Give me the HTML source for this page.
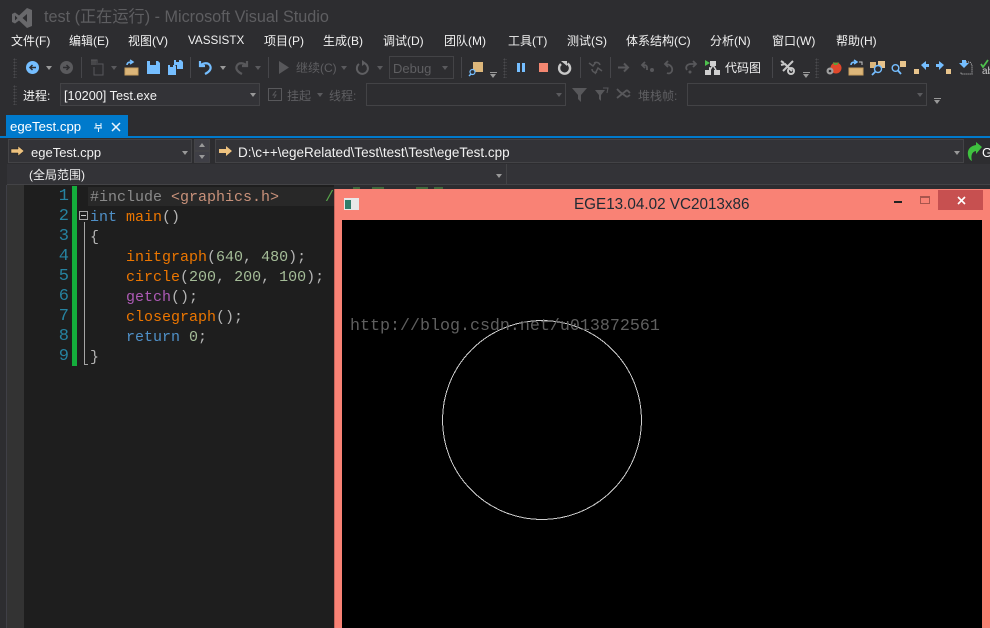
<!DOCTYPE html>
<html><head><meta charset="utf-8">
<style>
html,body{margin:0;padding:0;background:#2d2d30}
#r{position:relative;width:990px;height:628px;overflow:hidden;background:#2d2d30;font-family:"Liberation Sans","Noto Sans CJK SC",sans-serif;font-size:12px;color:#f1f1f1}
.a{position:absolute;white-space:pre}
.b{position:absolute;box-sizing:border-box}
.m{top:33px;line-height:16px;font-size:12px}
.d{color:#6d6d70}
.c{position:absolute;font-family:"Liberation Mono",monospace;font-size:15px;line-height:20px;white-space:pre;color:#b4b4b4}
.n{position:absolute;left:40px;width:29px;text-align:right;font-family:"Liberation Mono",monospace;font-size:17px;line-height:20px;color:#2683a0}
.o{color:#ec7600}.g{color:#a5bd98}.p{color:#4f90c8}.u{color:#ad5ab5}
.grip{position:absolute;width:4px;background-image:radial-gradient(#4a4a4e 0.8px,transparent 1px);background-size:3px 3px}
.sep{position:absolute;width:1px;background:#46464a}
.tri{position:absolute;width:0;height:0;border-left:3.5px solid transparent;border-right:3.5px solid transparent;border-top:4px solid #999}
.tri.x{border-top-color:#5a5a5d}
svg{position:absolute;overflow:visible}
</style></head><body><div id="r">

<!-- title -->
<svg style="left:12px;top:8px" width="21" height="20" viewBox="0 0 21 20"><path d="M15 0 L20 2 V18 L15 20 L7 12.5 L3 15.5 L0 14 V6 L3 4.500 L7 7.500Z M15 6 L10.500 10 L15 14Z M3 7.500 V12.500 L5.500 10Z" fill="#68686b" fill-rule="evenodd"/></svg>
<div class="a" style="left:44px;top:8px;font-size:16.200px;line-height:19px;color:#5e5e61">test (正在运行) - Microsoft Visual Studio</div>

<!-- menu -->
<div class="a m" style="left:11px">文件(F)</div>
<div class="a m" style="left:69px">编辑(E)</div>
<div class="a m" style="left:128px">视图(V)</div>
<div class="a m" style="left:188px;font-size:11.700px">VASSISTX</div>
<div class="a m" style="left:264px">项目(P)</div>
<div class="a m" style="left:323px">生成(B)</div>
<div class="a m" style="left:383px">调试(D)</div>
<div class="a m" style="left:444px">团队(M)</div>
<div class="a m" style="left:508px">工具(T)</div>
<div class="a m" style="left:567px">测试(S)</div>
<div class="a m" style="left:626px">体系结构(C)</div>
<div class="a m" style="left:710px">分析(N)</div>
<div class="a m" style="left:772px">窗口(W)</div>
<div class="a m" style="left:836px">帮助(H)</div>

<!-- toolbar 1 -->
<div class="grip" style="left:13px;top:58px;height:20px"></div>
<svg style="left:26px;top:61px" width="13" height="13"><circle cx="6.500" cy="6.500" r="6.500" fill="#75beff"/><path d="M10 6.500H4M6.500 4L4 6.500L6.500 9" stroke="#2d2d30" stroke-width="1.500" fill="none"/></svg>
<div class="tri" style="left:46px;top:66px"></div>
<svg style="left:60px;top:61px" width="13" height="13"><circle cx="6.500" cy="6.500" r="6.500" fill="#5a5a5d"/><path d="M3 6.500H9M6.500 4L9 6.500L6.500 9" stroke="#2d2d30" stroke-width="1.500" fill="none"/></svg>
<div class="sep" style="left:81px;top:57px;height:21px"></div>
<svg style="left:90px;top:59px" width="14" height="17"><path d="M1 1h6v3M6 5h7v11H4V8" stroke="#58585b" fill="none"/><path d="M1 1h5v5H1z" fill="#58585b" opacity=".6"/></svg>
<div class="tri x" style="left:111px;top:66px"></div>
<svg style="left:124px;top:60px" width="15" height="16"><path d="M1 8h13v7H1z" fill="#dcb67a"/><path d="M1 8h13v7H1z" stroke="#c9a05f" fill="none"/><path d="M3 5C3 2 6 2 8 2M6 0l3 2-3 2" stroke="#75beff" stroke-width="1.500" fill="none"/></svg>
<svg style="left:147px;top:61px" width="13" height="13"><path d="M0 0h3v4h6V0h2l2 2v11H0z" fill="#75beff"/></svg>
<svg style="left:168px;top:60px" width="15" height="15"><path d="M6 0h2v2h3V0h2l2 2v7H9V5H6z" fill="#75beff"/><path d="M0 5h2v2h3V5h2l1 1v9H0z" fill="#75beff"/></svg>
<div class="sep" style="left:190px;top:57px;height:21px"></div>
<svg style="left:198px;top:60px" width="15" height="15"><path d="M2 1v5h5M2.500 5.500C5 3 10 2 12 5.500C14 9 11 12 7 14" stroke="#75beff" stroke-width="2.200" fill="none"/></svg>
<div class="tri" style="left:220px;top:66px"></div>
<svg style="left:234px;top:60px" width="15" height="15"><path d="M13 1v5H8M12.500 5.500C10 3 5 2 3 5.500C1 9 4 12 8 14" stroke="#58585b" stroke-width="2.200" fill="none"/></svg>
<div class="tri x" style="left:255px;top:66px"></div>
<div class="sep" style="left:268px;top:57px;height:21px"></div>
<svg style="left:279px;top:61px" width="10" height="13"><path d="M0 0L10 6.500L0 13Z" fill="#58585b"/></svg>
<div class="a d" style="left:296px;top:60px;line-height:16px;color:#5f5f62">继续(C)</div>
<div class="tri x" style="left:341px;top:66px"></div>
<svg style="left:356px;top:60px" width="14" height="15"><path d="M9 3.500A5.500 5.500 0 1 1 3 4" stroke="#5f5f62" stroke-width="2" fill="none"/><path d="M6 0v6l4-3z" fill="#5f5f62"/></svg>
<div class="tri x" style="left:377px;top:66px"></div>
<div class="b" style="left:389px;top:56px;width:65px;height:23px;border:1px solid #434346"></div>
<div class="a" style="left:393px;top:60px;line-height:17px;font-size:13px;color:#5f5f62">Debug</div>
<div class="tri x" style="left:442px;top:66px"></div>
<div class="sep" style="left:461px;top:57px;height:21px"></div>
<svg style="left:469px;top:60px" width="14" height="16"><path d="M4 2h10v10H4z" fill="#dcb67a"/><circle cx="3.500" cy="12" r="2.500" stroke="#75beff" fill="#2d2d30" stroke-width="1.200"/><path d="M2 14L0 16" stroke="#75beff" stroke-width="1.500"/></svg>
<div class="b" style="left:490px;top:72px;width:7px;height:1px;background:#999"></div><div class="tri" style="left:490px;top:74px"></div>
<div class="grip" style="left:503px;top:58px;height:20px"></div>
<div class="b" style="left:517px;top:63px;width:3px;height:9px;background:#75beff"></div>
<div class="b" style="left:522px;top:63px;width:3px;height:9px;background:#75beff"></div>
<div class="b" style="left:539px;top:63px;width:9px;height:9px;background:#f48771"></div>
<svg style="left:558px;top:60px" width="14" height="15"><path d="M9.500 3.500A5.500 5.500 0 1 1 3 4" stroke="#c8c8c8" stroke-width="2.400" fill="none"/><path d="M3 1l6 0v5" stroke="none" fill="#c8c8c8"/></svg>
<div class="sep" style="left:580px;top:57px;height:21px"></div>
<svg style="left:588px;top:60px" width="15" height="15"><path d="M1 3l4 3 3-4M7 14l3-6 4 3M4 9c0 3 3 4 5 3M12 5C11 2 8 2 6 3" stroke="#58585b" stroke-width="1.500" fill="none"/></svg>
<div class="sep" style="left:610px;top:57px;height:21px"></div>
<svg style="left:618px;top:62px" width="12" height="11"><path d="M0 5.500h9M6 1.500l4 4-4 4" stroke="#58585b" stroke-width="2" fill="none"/></svg>
<svg style="left:640px;top:61px" width="15" height="13"><path d="M5 1L2 4l3 3M2 4h2c2 0 3 1 3 3v2" stroke="#58585b" stroke-width="1.800" fill="none"/><circle cx="12" cy="9" r="2" fill="#58585b"/></svg>
<svg style="left:663px;top:60px" width="12" height="15"><path d="M5 1L2 4l3 3M2 4c5 0 8 3 7 7-1 2-3 3-5 2" stroke="#58585b" stroke-width="1.800" fill="none"/></svg>
<svg style="left:685px;top:61px" width="12" height="13"><path d="M8 0l3 3-3 3M11 3H6C2 3 0 6 2 9" stroke="#58585b" stroke-width="1.800" fill="none"/><circle cx="5" cy="11" r="1.500" fill="#58585b"/></svg>
<svg style="left:705px;top:60px" width="15" height="15"><path d="M0 0l5 3-5 3z" fill="#4ec14e"/><path d="M5 1h6v5H5zM4 7l3 1-3 3zM0 10h6v5H0zM9 10h6v5H9z" fill="#d0d0d0"/><path d="M8 5l-3 5M8 5l3 5" stroke="#d0d0d0" stroke-width="1.500"/></svg>
<div class="a" style="left:725px;top:60px;line-height:16px">代码图</div>
<div class="sep" style="left:772px;top:57px;height:21px"></div>
<svg style="left:780px;top:60px" width="16" height="15"><path d="M1 1l3 2M1 5l4-1 7 7M13 1l-10 10" stroke="#c8c8c8" stroke-width="2" fill="none"/><circle cx="11" cy="11" r="3" stroke="#c8c8c8" stroke-width="2" fill="none"/></svg>
<div class="b" style="left:803px;top:72px;width:7px;height:1px;background:#999"></div><div class="tri" style="left:803px;top:74px"></div>
<div class="grip" style="left:815px;top:58px;height:20px"></div>
<svg style="left:825px;top:60px" width="16" height="16"><circle cx="11" cy="8" r="5.500" fill="#e0482b"/><path d="M8 2l3 1 3-1-2 3h-3z" fill="#5a9e3c"/><circle cx="5" cy="11" r="3.500" fill="#a0a0a0"/><circle cx="5" cy="11" r="1.300" fill="#2d2d30"/></svg>
<svg style="left:848px;top:60px" width="15" height="16"><path d="M1 8h14v7H1z" fill="#dcb67a"/><path d="M1 8h14v7H1z" stroke="#c9a05f" fill="none"/><path d="M3 5C3 2 6 2 8 2M6 0l3 2-3 2" stroke="#75beff" stroke-width="1.500" fill="none"/><path d="M11 2h3v3" stroke="#c8c8c8" fill="none"/></svg>
<svg style="left:870px;top:60px" width="15" height="16"><path d="M0 2h6v6H0z" fill="#dcb67a"/><path d="M8 1h7v7H8z" fill="#e8c48c"/><circle cx="8" cy="9" r="3.500" stroke="#75beff" fill="#2d2d30" stroke-width="1.400"/><path d="M5.500 11.500L2 15" stroke="#75beff" stroke-width="1.800"/></svg>
<svg style="left:891px;top:61px" width="15" height="14"><path d="M9 0h6v6H9z" fill="#e8c48c"/><circle cx="4.500" cy="7" r="3.300" stroke="#75beff" fill="none" stroke-width="1.400"/><path d="M7 9.500L10 13" stroke="#75beff" stroke-width="1.800"/></svg>
<svg style="left:914px;top:60px" width="15" height="15"><path d="M0 9h5v5H0z" fill="#e8c48c"/><path d="M7 5l5-4v3h3v3h-3v3z" fill="#75beff"/></svg>
<svg style="left:936px;top:60px" width="15" height="15"><path d="M10 9h5v5h-5z" fill="#e8c48c"/><path d="M8 5L3 1v3H0v3h3v3z" fill="#75beff"/></svg>
<svg style="left:958px;top:60px" width="15" height="15"><path d="M6 8L1 3h3V0h4v3h3z" fill="#75beff"/><path d="M8 2h4l2 3v9H3v-2" stroke="#c8c8c8" stroke-dasharray="1 1" fill="none"/></svg>
<svg style="left:980px;top:60px" width="10" height="15"><path d="M1 4l2 3 5-7" stroke="#4ec14e" stroke-width="1.800" fill="none"/></svg>
<div class="a" style="left:982px;top:67px;font-size:10px;line-height:10px;color:#c8c8c8">ab</div>

<!-- toolbar 2 -->
<div class="grip" style="left:13px;top:85px;height:20px"></div>
<div class="a" style="left:23px;top:88px;line-height:16px">进程:</div>
<div class="b" style="left:60px;top:83px;width:200px;height:23px;border:1px solid #434346;background:#333337"></div>
<div class="a" style="left:64px;top:88px;line-height:16px;font-size:12.700px">[10200] Test.exe</div>
<div class="tri" style="left:250px;top:93px"></div>
<svg style="left:268px;top:88px" width="14" height="13"><path d="M.5.5h13v12H.5z" stroke="#58585b" fill="none"/><path d="M8 3L5 7h3L6 10" stroke="#58585b" fill="none"/></svg>
<div class="a" style="left:287px;top:88px;line-height:16px;color:#5f5f62">挂起</div>
<div class="tri x" style="left:317px;top:93px"></div>
<div class="a" style="left:329px;top:88px;line-height:16px;color:#5f5f62">线程:</div>
<div class="b" style="left:366px;top:83px;width:200px;height:23px;border:1px solid #434346"></div>
<div class="tri x" style="left:556px;top:93px"></div>
<svg style="left:572px;top:88px" width="15" height="14"><path d="M0 0h15L9 7v7L6 11V7z" fill="#58585b"/></svg>
<svg style="left:595px;top:88px" width="14" height="13"><path d="M0 2h10L6 7v6L4 11V7z" fill="#58585b"/><path d="M8 0l5 0-1 5" stroke="#58585b" fill="none"/></svg>
<svg style="left:616px;top:88px" width="16" height="13"><path d="M1 1l3 3 7 5M1 10l10-8M11 2l3 3M11 9l3-2" stroke="#58585b" stroke-width="1.800" fill="none"/></svg>
<div class="a" style="left:638px;top:88px;line-height:16px;color:#5f5f62">堆栈帧:</div>
<div class="b" style="left:687px;top:83px;width:240px;height:23px;border:1px solid #434346"></div>
<div class="tri x" style="left:917px;top:93px"></div>
<div class="b" style="left:934px;top:98px;width:7px;height:1px;background:#999"></div><div class="tri" style="left:934px;top:100px"></div>

<!-- tab -->
<div class="b" style="left:6px;top:115px;width:122px;height:22px;background:#007acc"></div>
<div class="a" style="left:10px;top:118px;font-size:13.200px;line-height:17px;color:#fff">egeTest.cpp</div>
<svg style="left:93px;top:122px" width="10" height="10"><path d="M3 1v5h5V1M1 6h8M5.500 6v4M3 3.500h5" stroke="#e8f4fc" fill="none"/></svg>
<svg style="left:111px;top:122px" width="10" height="10"><path d="M1 1l8 8M9 1l-8 8" stroke="#e8f4fc" stroke-width="1.500"/></svg>
<div class="b" style="left:0;top:136px;width:990px;height:2px;background:#007acc"></div>

<!-- nav bar -->
<div class="b" style="left:8px;top:139px;width:184px;height:24px;border:1px solid #434346;background:#333337"></div>
<svg style="left:11px;top:146px" width="13" height="10"><path d="M7 0l6 5-6 5V7H0V3h7z" fill="#eec27f"/><path d="M7 0l6 5-6 5V7H0V3h7z" fill="none" stroke="#1e1e1e" stroke-width=".5"/></svg>
<div class="a" style="left:31px;top:145px;font-size:13px;line-height:16px">egeTest.cpp</div>
<div class="tri" style="left:182px;top:151px"></div>
<div class="b" style="left:194px;top:139px;width:16px;height:12px;background:#3f3f46;border:1px solid #434346"></div>
<div class="b" style="left:194px;top:151px;width:16px;height:12px;background:#3f3f46;border:1px solid #434346"></div>
<div class="tri" style="left:198.500px;top:143px;border-top:0;border-bottom:4px solid #999"></div>
<div class="tri" style="left:198.500px;top:155px"></div>
<div class="b" style="left:215px;top:139px;width:749px;height:24px;border:1px solid #434346;background:#333337"></div>
<svg style="left:219px;top:146px" width="13" height="10"><path d="M7 0l6 5-6 5V7H0V3h7z" fill="#eec27f"/></svg>
<div class="a" style="left:238px;top:145px;font-size:13.500px;line-height:16px">D:\c++\egeRelated\Test\test\Test\egeTest.cpp</div>
<div class="tri" style="left:954px;top:151px"></div>
<svg style="left:967px;top:142px" width="16" height="19"><path d="M15 5L9 0v3C3 4 0 8 1 13c.5 3 2 5 4 6-1-4-1-9 4-10v3z" fill="#3fc13f"/></svg>
<div class="a" style="left:982px;top:145px;font-size:13px;line-height:16px;color:#fff">G</div>

<!-- scope bar -->
<div class="b" style="left:7px;top:164px;width:499px;height:21px;border-bottom:1px solid #434346;background:#333337"></div>
<div class="a" style="left:29px;top:168px;line-height:15px">(全局范围)</div>
<div class="tri" style="left:496px;top:174px"></div>
<div class="b" style="left:506px;top:164px;width:484px;height:21px;border:1px solid #434346;border-right:0;border-top:0;background:#333337"></div>

<!-- editor -->
<div class="b" style="left:0;top:185px;width:6px;height:443px;background:#2d2d30"></div>
<div class="b" style="left:6px;top:185px;width:1px;height:443px;background:#3f3f46"></div>
<div class="b" style="left:7px;top:185px;width:17px;height:443px;background:#333333"></div>
<div class="b" style="left:24px;top:185px;width:310px;height:443px;background:#1e1e1e"></div>
<div class="b" style="left:72px;top:186px;width:5px;height:180px;background:#14ad3c"></div>
<div class="b" style="left:88px;top:187px;width:246px;height:19px;background:#282828"></div>

<div class="n" style="top:187px">1</div><div class="n" style="top:207px">2</div><div class="n" style="top:227px">3</div><div class="n" style="top:247px">4</div><div class="n" style="top:267px">5</div><div class="n" style="top:287px">6</div><div class="n" style="top:307px">7</div><div class="n" style="top:327px">8</div><div class="n" style="top:347px">9</div>

<svg style="left:79px;top:211px" width="9" height="9"><path d="M.5.500h8v8h-8z" stroke="#a5a5a5" fill="none"/><path d="M2 4.500h5" stroke="#c8c8c8"/></svg>
<div class="b" style="left:84px;top:222px;width:1px;height:143px;background:#a5a5a5"></div>
<div class="b" style="left:84px;top:364px;width:4px;height:1px;background:#a5a5a5"></div>

<div class="c" style="left:90px;top:188px;color:#8a8a8a">#include <span style="color:#c8917a">&lt;graphics.h&gt;</span></div>
<div class="c" style="left:325px;top:188px;color:#57a64a">/</div>
<div class="c" style="left:90px;top:208px"><span class="p">int</span> <span class="o">main</span>()</div>
<div class="c" style="left:90px;top:228px">{</div>
<div class="c" style="left:126px;top:248px"><span class="o">initgraph</span>(<span class="g">640</span>, <span class="g">480</span>);</div>
<div class="c" style="left:126px;top:268px"><span class="o">circle</span>(<span class="g">200</span>, <span class="g">200</span>, <span class="g">100</span>);</div>
<div class="c" style="left:126px;top:288px"><span class="u">getch</span>();</div>
<div class="c" style="left:126px;top:308px"><span class="o">closegraph</span>();</div>
<div class="c" style="left:126px;top:328px"><span class="p">return</span> <span class="g">0</span>;</div>
<div class="c" style="left:90px;top:348px">}</div>

<!-- green comment remnants above window -->
<div class="b" style="left:353px;top:187px;width:7px;height:2px;background:#57a64a;opacity:.5"></div>
<div class="b" style="left:372px;top:187px;width:12px;height:2px;background:#57a64a;opacity:.5"></div>
<div class="b" style="left:416px;top:187px;width:12px;height:2px;background:#57a64a;opacity:.5"></div>
<div class="b" style="left:434px;top:187px;width:9px;height:2px;background:#57a64a;opacity:.5"></div>

<!-- EGE window -->
<div class="b" style="left:334px;top:189px;width:656px;height:439px;background:#f98275;border-left:1px solid #c4655c"></div>
<div class="b" style="left:344px;top:198px;width:15px;height:12px;background:#e8e8e8"></div>
<div class="b" style="left:345px;top:200px;width:6px;height:9px;background:#2f7d6a"></div>
<div class="a" style="left:574px;top:195px;font-size:15.250px;line-height:19px;color:#1e2a33">EGE13.04.02 VC2013x86</div>
<div class="b" style="left:894px;top:201px;width:8px;height:2px;background:#222"></div>
<div class="b" style="left:920px;top:196px;width:10px;height:8px;border:1px solid #a8554d;border-top-width:2px"></div>
<div class="b" style="left:938px;top:190px;width:45px;height:20px;background:#c75050"></div>
<svg style="left:957px;top:196px" width="9" height="9"><path d="M1 1l7 7M8 1l-7 7" stroke="#fff" stroke-width="1.600"/></svg>
<div class="b" style="left:342px;top:220px;width:640px;height:408px;background:#000"></div>
<svg style="left:342px;top:220px" width="640" height="408"><circle cx="200" cy="200" r="99.500" fill="none" stroke="#d0d0d0" stroke-width="1" shape-rendering="crispEdges"/></svg>
<div class="a" style="left:350px;top:317px;font-family:'Liberation Mono',monospace;font-size:16.670px;line-height:20px;color:#5f5f5f">http://blog.csdn.net/u013872561</div>

</div></body></html>
